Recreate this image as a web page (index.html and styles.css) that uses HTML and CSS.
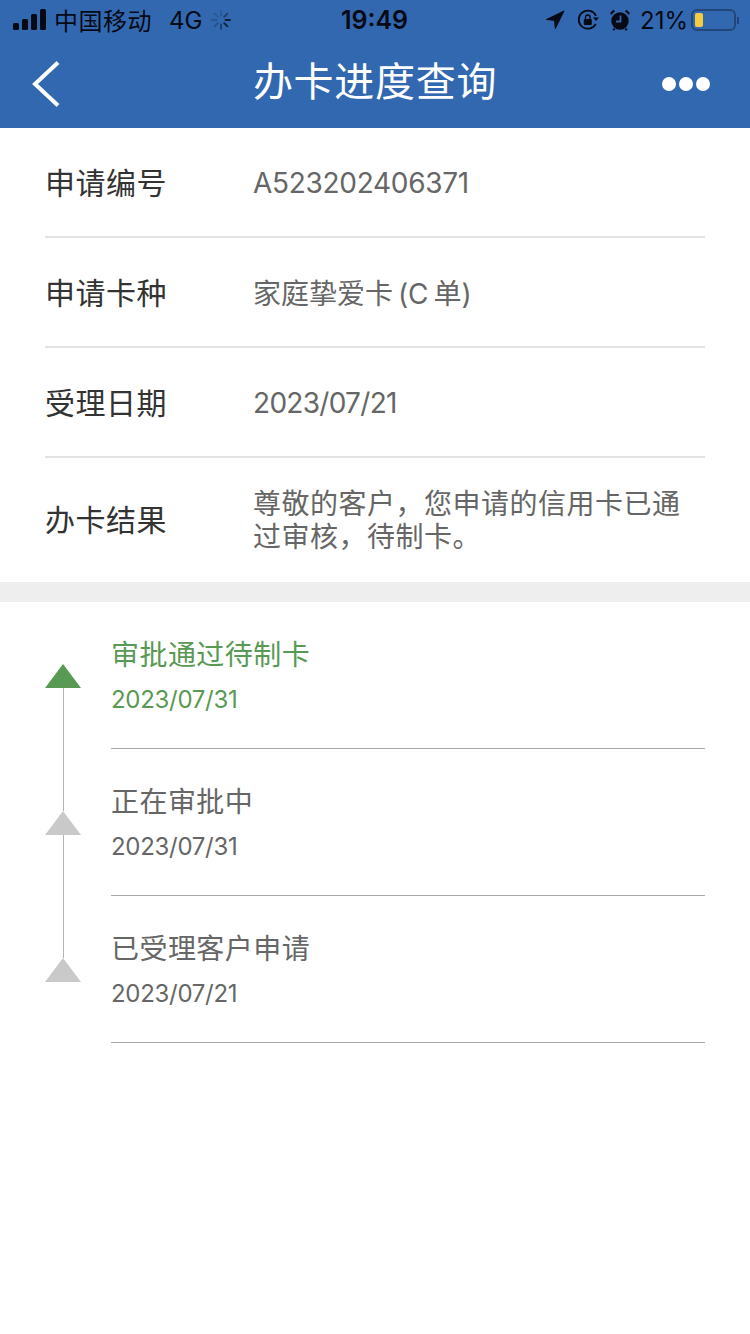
FILE: index.html
```html
<!DOCTYPE html>
<html lang="zh-CN">
<head>
<meta charset="utf-8">
<title>办卡进度查询</title>
<link rel="stylesheet" href="styles.css">
</head>
<body>
<header class="top">
  <div class="status">
    <div class="status-left">
      <svg class="signal" width="34" height="22" viewBox="0 0 34 22"><rect x="0" y="14" width="6" height="7" rx="1.5"/><rect x="9" y="10" width="6" height="11" rx="1.5"/><rect x="18" y="5" width="6" height="16" rx="1.5"/><rect x="27" y="0" width="6" height="21" rx="1.5"/></svg>
      <span class="carrier">中国移动</span>
      <span class="net">4G</span>
      <svg class="spin" width="20" height="20" viewBox="0 0 20 20" stroke-width="1.800" stroke-linecap="round"><g stroke="#0d1c33"><path d="M10 1v4.500" opacity=".2"/><path d="M16.400 3.600l-3.200 3.200" opacity=".55"/><path d="M19 10h-4.500" opacity=".95"/><path d="M16.400 16.400l-3.200-3.200" opacity=".95"/><path d="M10 19v-4.500" opacity=".55"/><path d="M3.600 16.400l3.200-3.200" opacity=".3"/><path d="M1 10h4.500" opacity=".25"/><path d="M3.600 3.600l3.200 3.200" opacity=".2"/></g></svg>
    </div>
    <span class="clock">19:49</span>
    <div class="status-right">
      <svg class="loc" width="20" height="20" viewBox="0 0 20 20"><path d="M19 1 1.500 9.500l8 .8.800 8.200z" stroke="#050a14" stroke-width="1" stroke-linejoin="round"/></svg>
      <svg class="lock" width="22" height="22" viewBox="0 0 22 22"><path d="M18.800 14.800A9 9 0 1 1 19 7" fill="none" stroke="#050a14" stroke-width="1.800"/><path d="M16 8.500h6l-3 3.500z"/><rect x="6.800" y="10" width="8" height="6" rx="1"/><path d="M8.500 10V8.300a2.300 2.300 0 0 1 4.600 0V10" fill="none" stroke="#050a14" stroke-width="1.400"/></svg>
      <svg class="alarm" width="20" height="22" viewBox="0 0 20 22"><circle cx="10" cy="12" r="8.700"/><path d="M1 6 5 2.200 3.600.8.200 3.800zM19 6 15 2.200l1.400-1.400 3.400 3zM3.500 19l2 1.500-1.500 1.200-1.500-1.200zM16.500 19l-2 1.500 1.500 1.200 1.500-1.200z"/><path d="M10.500 6.500v6H6" fill="none" stroke="#3268b0" stroke-width="1.800"/></svg>
      <span class="pct">21%</span>
      <div class="battery"><span class="battery-fill"></span></div>
      <span class="battery-cap"></span>
    </div>
  </div>
  <nav class="nav">
    <svg class="back" width="30" height="48" viewBox="0 0 30 48"><path d="M27 2.500 4 24l23 21.500" fill="none" stroke="#fff" stroke-width="4"/></svg>
    <h1 class="title">办卡进度查询</h1>
    <div class="more"><i></i><i></i><i></i></div>
  </nav>
</header>

<section class="info">
  <div class="row">
    <div class="label">申请编号</div>
    <div class="value value-id">A523202406371</div>
  </div>
  <div class="row">
    <div class="label">申请卡种</div>
    <div class="value value-card">家庭挚爱卡 (C 单)</div>
  </div>
  <div class="row">
    <div class="label">受理日期</div>
    <div class="value value-date">2023/07/21</div>
  </div>
  <div class="row row-last">
    <div class="label">办卡结果</div>
    <div class="value value-multi">尊敬的客户，您申请的信用卡已通过审核，待制卡。</div>
  </div>
</section>

<div class="band"></div>

<section class="timeline">
  <div class="step step-active step-first">
    <div class="marker"><span class="seg seg-top"></span><span class="tri"></span><span class="seg seg-bottom"></span></div>
    <div class="body">
      <div class="step-title">审批通过待制卡</div>
      <div class="step-date">2023/07/31</div>
    </div>
  </div>
  <div class="step">
    <div class="marker"><span class="seg seg-top"></span><span class="tri"></span><span class="seg seg-bottom"></span></div>
    <div class="body">
      <div class="step-title">正在审批中</div>
      <div class="step-date">2023/07/31</div>
    </div>
  </div>
  <div class="step step-last">
    <div class="marker"><span class="seg seg-top"></span><span class="tri"></span><span class="seg seg-bottom"></span></div>
    <div class="body">
      <div class="step-title">已受理客户申请</div>
      <div class="step-date">2023/07/21</div>
    </div>
  </div>
</section>
</body>
</html>
```
FILE: styles.css
```css
* { box-sizing: border-box; }
html, body { margin: 0; padding: 0; }
body {
  width: 750px;
  height: 1334px;
  background: #fff;
  font-family: "Inter", "Noto Sans CJK SC", sans-serif;
  overflow: hidden;
}
.top { background: #3268b0; height: 128px; }
.status {
  height: 40px;
  display: grid;
  grid-template-columns: 1fr auto 1fr;
  align-items: center;
  color: #050a14;
  font-size: 24px;
  padding: 0 11px 0 13px;
}
.status-left { display: flex; align-items: center; }
.status-left svg { fill: #050a14; }
.carrier { margin: 0 0 2px 7px; letter-spacing: 0.5px; }
.net { margin-left: 17px; }
.spin { margin-left: 9px; }
.clock { font-weight: 600; font-size: 25px; margin: 0 3px 0 0; }
.status-right { display: flex; align-items: center; justify-content: flex-end; }
.status-right svg { fill: #050a14; }
.lock { margin-left: 12px; }
.alarm { margin-left: 11px; }
.pct { margin-left: 10px; }
.battery {
  margin-left: 3px;
  width: 45px;
  height: 22px;
  border: 2px solid #23467a;
  border-radius: 6px;
  padding: 2px;
}
.battery-fill { display: block; width: 8px; height: 100%; background: #f5cc3d; border-radius: 2px; }
.battery-cap { width: 2px; height: 7px; margin-left: 1px; background: #23467a; }
.nav {
  height: 88px;
  display: grid;
  grid-template-columns: 1fr auto 1fr;
  align-items: center;
  padding: 0 40px;
}
.title {
  margin: 0 0 10px;
  font-size: 40px;
  font-weight: 400;
  color: #fff;
  letter-spacing: 0.7px;
  text-align: center;
}
.back { display: block; margin-left: -9px; }
.more { display: flex; gap: 3px; justify-self: end; }
.more i { width: 14px; height: 14px; border-radius: 50%; background: #fff; }

.info { padding: 0 45px; }
.row {
  display: flex;
  align-items: center;
  height: 110px;
  border-bottom: 2px solid #e3e3e3;
}
.row-last { height: 124px; border-bottom: 0; }
.label { width: 208px; font-size: 30px; color: #333; flex: none; letter-spacing: 0.5px; margin-bottom: 2px; }
.row-last .label { margin-bottom: 4px; }
.value { font-size: 28px; color: #666; }
.value-id { letter-spacing: -0.3px; margin-top: 2px; }
.value-date { letter-spacing: -0.7px; margin-top: 2px; }
.value-card { word-spacing: -3px; }
.value-multi { line-height: 33px; width: 440px; letter-spacing: 0.5px; margin-top: 2px; }
.band { height: 20px; background: #eeeeee; }

.step { display: flex; height: 147px; padding: 0 45px; }
.marker { width: 66px; flex: none; display: flex; flex-direction: column; }
.seg { display: block; width: 1px; background: #b5b5b5; margin-left: 18px; }
.seg-top { height: 62px; }
.seg-bottom { flex: 1; }
.step-first .seg-top, .step-last .seg-bottom { visibility: hidden; }
.tri {
  display: block;
  width: 36px;
  height: 24px;
  background: #c9c9c9;
  clip-path: polygon(50% 0, 100% 100%, 0 100%);
}
.body { flex: 1; border-bottom: 1px solid #a8a8a8; padding-top: 32px; color: #666; }
.step-title { font-size: 28px; line-height: 42px; letter-spacing: 0.45px; }
.step-date { font-size: 24px; line-height: 36px; margin-top: 6px; letter-spacing: -0.3px; }
.step-active .body { color: #589953; }
.step-active .tri { background: #589953; }
```
